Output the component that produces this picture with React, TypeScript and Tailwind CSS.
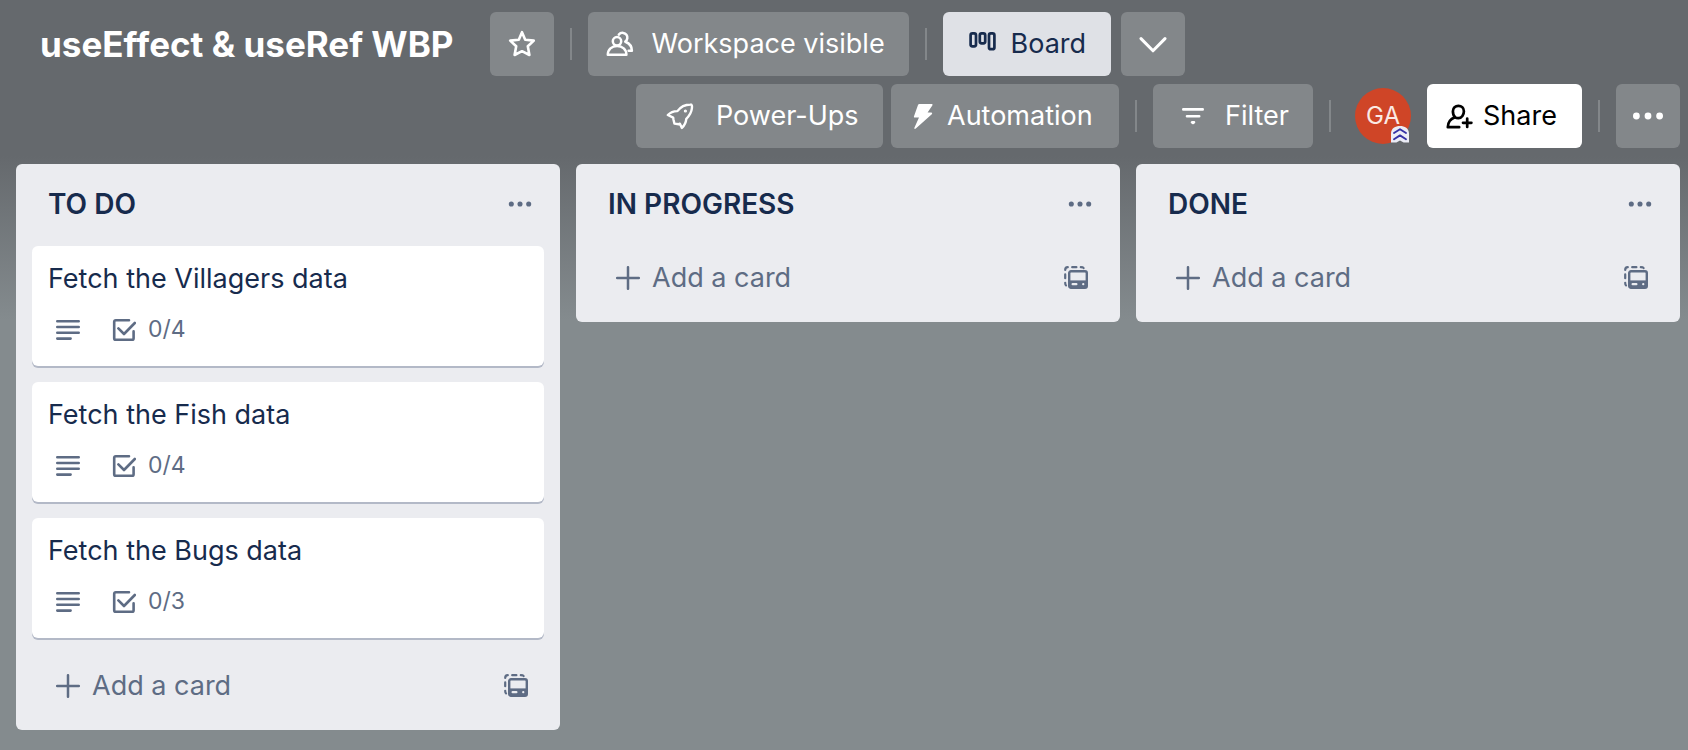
import React from "react";

type Card = { title: string; checklist: string };
type Column = { title: string; cards: Card[] };

const columns: Column[] = [
  {
    title: "TO DO",
    cards: [
      { title: "Fetch the Villagers data", checklist: "0/4" },
      { title: "Fetch the Fish data", checklist: "0/4" },
      { title: "Fetch the Bugs data", checklist: "0/3" },
    ],
  },
  { title: "IN PROGRESS", cards: [] },
  { title: "DONE", cards: [] },
];

const stroke = {
  fill: "none",
  stroke: "currentColor",
  strokeLinecap: "round",
  strokeLinejoin: "round",
  "aria-hidden": true,
} as const;

function StarIcon() {
  return (
    <svg {...stroke} viewBox="0 0 28 28" strokeWidth="2.6" className="size-7">
      <path d="M14 2.2 17.2 9.7 25.8 10.6 19.8 16.3 21.4 25 14 21.2 6.6 25 8.2 16.3 2.2 10.6 10.8 9.7Z" />
    </svg>
  );
}

function PeopleIcon() {
  return (
    <svg {...stroke} viewBox="0 0 28 28" strokeWidth="2.5" className="size-7">
      <circle cx="11" cy="11.3" r="4.2" />
      <path d="M1.8 24.7H20.4C20.4 19.4 16.4 16 11.1 16S1.8 19.4 1.8 24.7Z" />
      <path d="M12.8 4.6C14 3.2 15.6 2.7 17.2 2.9 20 3.3 21.7 5.6 21.3 8.2 21.1 9.6 20.4 10.7 19.3 11.5" />
      <path d="M19.8 12C23.4 13.4 25.8 16.6 25.9 20.7H22.6" />
    </svg>
  );
}

function BoardIcon() {
  return (
    <svg {...stroke} viewBox="0 0 28 28" strokeWidth="2.7" className="size-7">
      <rect x="1.6" y="3.4" width="5.4" height="13" rx="1.8" />
      <rect x="10.8" y="3.4" width="5.4" height="10" rx="1.8" />
      <rect x="20" y="3.4" width="5.4" height="15.8" rx="1.8" />
    </svg>
  );
}

function ChevronDownIcon() {
  return (
    <svg {...stroke} viewBox="0 0 28 28" strokeWidth="3" className="size-7">
      <path d="M2 8.6 14 20.8 26 8.6" />
    </svg>
  );
}

function RocketIcon() {
  return (
    <svg {...stroke} viewBox="0 0 28 28" strokeWidth="2.4" className="size-7">
      <path d="M24.5 2.5C26 2.4 26.2 4 25.9 6.4 25.4 10.5 23.2 14 20.3 16.8 20 20.2 18.4 23.4 15.9 25.9L13.9 21.7 12.8 22.2 8.4 21.6 7.4 17.2 7.2 15.6 1.8 13C4.4 10.4 7.8 9 11.4 9.1 14.2 5.4 19.2 2.6 24.5 2.5Z" />
      <circle cx="19.4" cy="9" r="0.9" strokeWidth="1.4" />
    </svg>
  );
}

function BoltIcon() {
  return (
    <svg viewBox="0 0 20 28" className="h-7 w-5" fill="currentColor" aria-hidden="true">
      <path d="M6.3 2H18.6C19.5 2 19.8 2.7 19.3 3.4L14.6 10.6H18.2C19.2 10.6 19.5 11.5 18.8 12.2L2.8 26.6C1.8 27.4 1 26.8 1.4 25.8L6 15.6H1.8C1 15.6 .7 15 1 14.3L5 3C5.3 2.3 5.7 2 6.3 2Z" />
    </svg>
  );
}

function FilterIcon() {
  return (
    <svg {...stroke} viewBox="0 0 28 28" strokeWidth="2.6" className="size-7">
      <path d="M4.3 7.4H23.7M8 14.2H20.2M13 20.2H15L14 21Z" />
    </svg>
  );
}

function AddPersonIcon() {
  return (
    <svg {...stroke} viewBox="0 0 28 28" strokeWidth="2.7" className="size-7">
      <path d="M14.2 25.2H2.8C2.8 20.4 5.2 17 10 15.2" />
      <path d="M10 15.2C8.2 13.6 7.9 11.6 7.9 9.2 7.9 6 10.4 3.8 13.4 3.8S18.9 6 18.9 9.2C18.9 12.6 16.8 16.2 13.4 16.2 12 16.2 10.9 15.9 10 15.2Z" />
      <path d="M22.2 16.6V25M18 20.8H26.4" />
    </svg>
  );
}

function DotsIcon({ className }: { className: string }) {
  return (
    <svg viewBox="0 0 32 8" className={className} fill="currentColor" aria-hidden="true">
      <circle cx="4.4" cy="4" r="3.4" />
      <circle cx="16" cy="4" r="3.4" />
      <circle cx="27.6" cy="4" r="3.4" />
    </svg>
  );
}

function DescriptionIcon() {
  return (
    <svg {...stroke} viewBox="0 0 24 24" strokeWidth="2.6" className="size-6">
      <path d="M1.3 3.2H22.7M1.3 9H22.7M1.3 14.8H22.7M1.3 20.6H14.6" />
    </svg>
  );
}

function ChecklistIcon() {
  return (
    <svg {...stroke} viewBox="0 0 24 24" strokeWidth="2.6" className="size-6">
      <path d="M17 2.2H3.8C2.7 2.2 2.2 2.8 2.2 3.8V20.2C2.2 21.2 2.8 21.8 3.8 21.8H20C21 21.8 21.6 21.2 21.6 20.2V13.4" />
      <path d="M6.4 10.4 12 16 22.8 5" />
    </svg>
  );
}

function PlusIcon() {
  return (
    <svg {...stroke} viewBox="0 0 24 24" strokeWidth="2.5" className="size-6">
      <path d="M12 1.2V22.8M1.2 12H22.8" />
    </svg>
  );
}

function TemplateIcon() {
  return (
    <svg viewBox="0 0 24 24" className="size-6" fill="none" stroke="currentColor" aria-hidden="true">
      <path strokeWidth="2.2" strokeLinecap="round" d="M1.2 4C1.2 1.8 1.8 1.2 3.8 1.2M8.2 1.2H12.4M16.8 1.2C18.6 1.2 19.2 1.4 19.6 2M1.2 8.4V12.2M1.2 16.8C1.2 18.4 1.4 19 2 19.4" />
      <rect x="5.2" y="5.2" width="17.6" height="16.6" rx="1.8" strokeWidth="2.4" />
      <path fill="currentColor" stroke="none" d="M5.2 14.4H22.8V21.6H5.2Z" />
      <path stroke="#ebecf0" strokeWidth="2.2" strokeLinecap="round" d="M8.6 18.2H12.4M19.2 18.2H19.3" />
    </svg>
  );
}

function AdminBadge() {
  return (
    <svg viewBox="0 0 18 18" className="absolute right-0.5 bottom-0 size-[18px]" aria-hidden="true">
      <path fill="#62666a" d="M0 8.6V17.6L9 15.8 18 17.6V8.6Z" />
      <path fill="#ebecf5" d="M0 7.4C0 2.4 4.4 0 9 0S18 2.4 18 7.4V16.4H12.6L9 14.6 5.4 16.4H0Z" />
      <path {...stroke} stroke="#3531a5" strokeWidth="1.9" d="M3 7 9 3.2 15 7M3 13.2 9 9.4 15 13.2" />
    </svg>
  );
}

type HeaderButtonProps = { className: string; label?: string; children: React.ReactNode };

function HeaderButton({ className, label, children }: HeaderButtonProps) {
  return (
    <button
      type="button"
      aria-label={label}
      className={`flex h-16 shrink-0 items-center rounded-md whitespace-nowrap ${className}`}
    >
      {children}
    </button>
  );
}

function Divider() {
  return <span className="mx-4 h-8 w-0.5 shrink-0 bg-white/20" />;
}

function BoardHeader() {
  return (
    <header className="flex flex-wrap items-center gap-y-2 px-2 pt-3 pb-4 text-[27px] leading-10 text-white">
      <div className="flex flex-wrap items-center">
        <h1 className="pr-9 pl-8 text-[35px] leading-10 font-bold">useEffect &amp; useRef WBP</h1>
        <HeaderButton label="Star board" className="w-16 justify-center bg-white/20">
          <StarIcon />
        </HeaderButton>
        <Divider />
        <HeaderButton className="min-w-[321px] gap-[18px] bg-white/20 pl-[18px]">
          <PeopleIcon />
          Workspace visible
        </HeaderButton>
        <Divider />
        <HeaderButton className="min-w-[168px] gap-3.5 bg-[#dfe1e6] pl-[26px] text-[#172b4d]">
          <BoardIcon />
          Board
        </HeaderButton>
        <HeaderButton label="Switch view" className="ml-2.5 w-16 justify-center bg-white/20">
          <ChevronDownIcon />
        </HeaderButton>
      </div>
      <div className="ml-auto flex flex-wrap items-center">
        <HeaderButton className="min-w-[247px] gap-[22px] bg-white/20 pl-[30px]">
          <RocketIcon />
          Power-Ups
        </HeaderButton>
        <HeaderButton className="ml-2 min-w-[228px] gap-3.5 bg-white/20 pl-[22px]">
          <BoltIcon />
          Automation
        </HeaderButton>
        <Divider />
        <HeaderButton className="min-w-[160px] gap-[18px] bg-white/20 pl-[26px]">
          <FilterIcon />
          Filter
        </HeaderButton>
        <Divider />
        <button
          type="button"
          className="relative mr-4 ml-2 flex size-14 shrink-0 items-center justify-center rounded-full bg-[#cf4527] text-[24px] text-[#fbeae5]"
        >
          GA
          <AdminBadge />
        </button>
        <HeaderButton className="min-w-[155px] gap-2.5 bg-white pl-[18px] text-black">
          <AddPersonIcon />
          Share
        </HeaderButton>
        <Divider />
        <HeaderButton label="Show menu" className="w-16 justify-center bg-white/20">
          <DotsIcon className="h-2 w-8" />
        </HeaderButton>
      </div>
    </header>
  );
}

function BoardCard({ card }: { card: Card }) {
  return (
    <li className="rounded-md bg-white px-4 pt-[13px] pb-5 shadow-[0_2px_0_#b3b9c7]">
      <a href="#" className="block text-[27px] leading-10 text-[#172b4d]">
        {card.title}
      </a>
      <div className="mt-3.5 flex h-[33px] items-center pl-2 text-[23px] text-[#5e6c84]">
        <DescriptionIcon />
        <span className="ml-8 flex items-center gap-3">
          <ChecklistIcon />
          {card.checklist}
        </span>
      </div>
    </li>
  );
}

function BoardColumn({ column }: { column: Column }) {
  return (
    <section className="rounded-md bg-[#ebecf0] px-4 pb-3 text-[#5e6c84]">
      <div className="flex h-20 items-center justify-between pr-3 pl-4">
        <h2 className="text-[28px] leading-10 font-semibold text-[#172b4d]">{column.title}</h2>
        <button type="button" aria-label="List actions" className="flex h-10 items-center">
          <DotsIcon className="h-1.5 w-6" />
        </button>
      </div>
      {column.cards.length > 0 && (
        <ul className="mt-0.5 mb-4 flex flex-col gap-4">
          {column.cards.map((card) => (
            <BoardCard key={card.title} card={card} />
          ))}
        </ul>
      )}
      <div className={`flex h-16 items-center justify-between pr-4 pl-6 ${column.cards.length > 0 ? "" : "mt-0.5"}`}>
        <button type="button" className="flex items-center gap-3 text-[27px] leading-10">
          <PlusIcon />
          Add a card
        </button>
        <button type="button" aria-label="Create from template">
          <TemplateIcon />
        </button>
      </div>
    </section>
  );
}

export default function App() {
  return (
    <div className="min-h-screen bg-[#848b8e] bg-[linear-gradient(#65696d_0,#65696d_156px,#848b8e_320px)] font-['Inter',sans-serif]">
      <BoardHeader />
      <main className="grid grid-cols-3 items-start gap-4 pr-2 pb-5 pl-4">
        {columns.map((column) => (
          <BoardColumn key={column.title} column={column} />
        ))}
      </main>
    </div>
  );
}
